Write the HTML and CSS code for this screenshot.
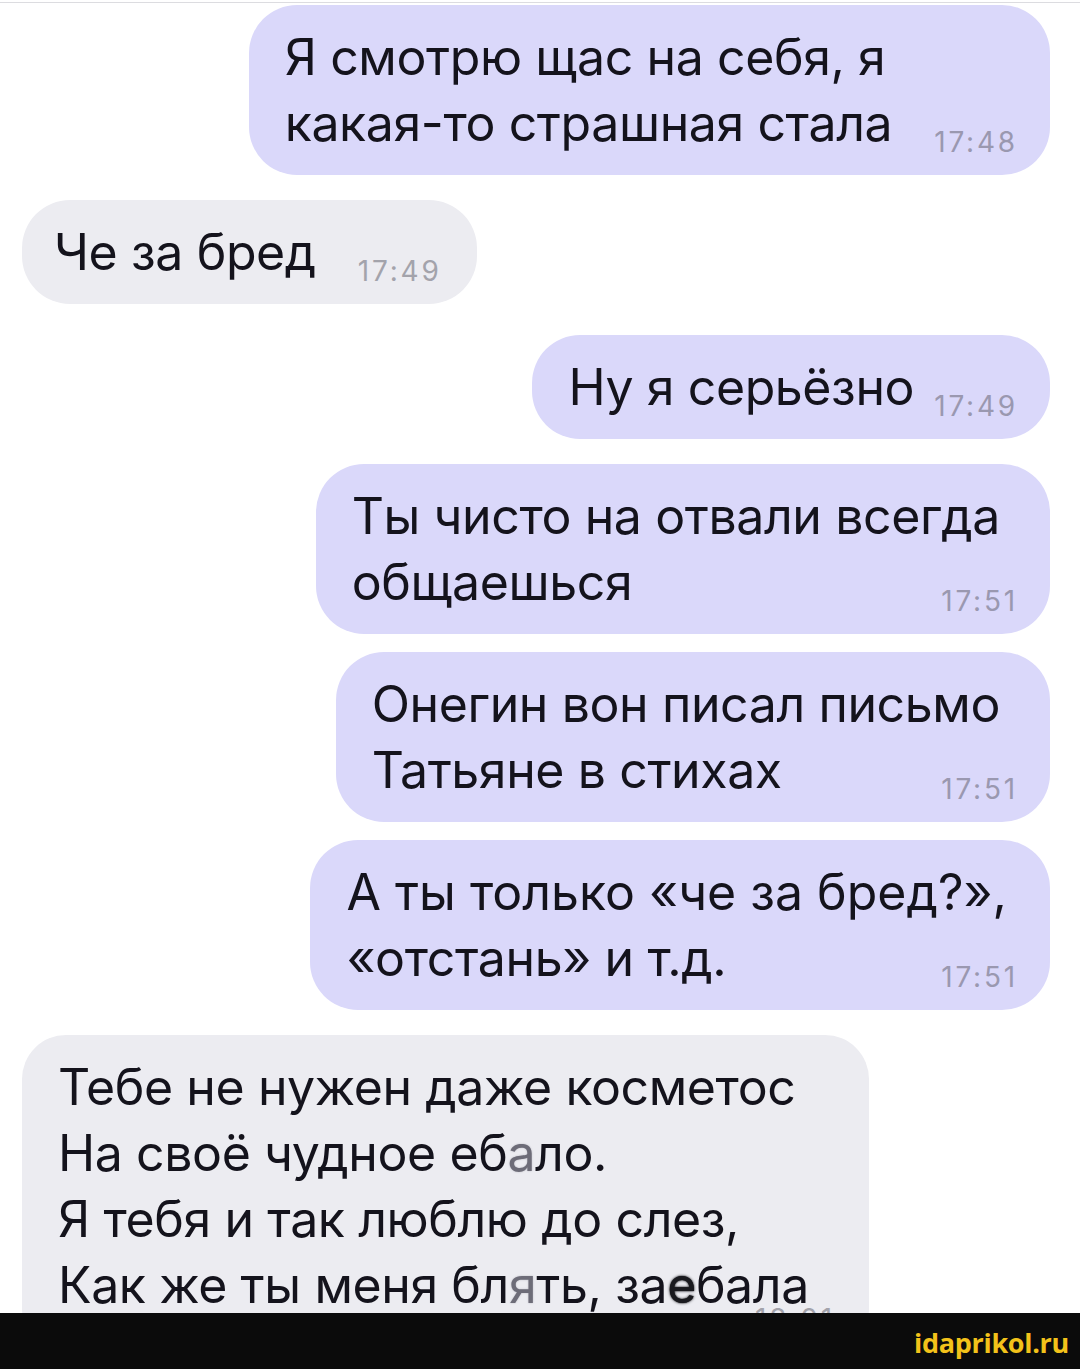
FILE: index.html
```html
<!DOCTYPE html>
<html lang="ru">
<head>
    <meta charset="UTF-8">
    <meta name="viewport" content="width=device-width, initial-scale=1.0">
    <title>Переписка</title>
    <link rel="stylesheet" href="styles.css">
</head>
<body>
    <div class="screen">
        <div class="chat">
            <div class="group">
                <div class="msg out">
                    <div class="line">Я смотрю щас на себя, я</div>
                    <div class="line last">
                        <span>какая-то страшная стала</span>
                        <span class="time">17:48</span>
                    </div>
                </div>
            </div>

            <div class="group">
                <div class="msg in">
                    <div class="line last">
                        <span>Че за бред</span>
                        <span class="time">17:49</span>
                    </div>
                </div>
            </div>

            <div class="group spaced">
                <div class="msg out">
                    <div class="line last tight">
                        <span>Ну я серьёзно</span>
                        <span class="time">17:49</span>
                    </div>
                </div>
            </div>

            <div class="group">
                <div class="msg out">
                    <div class="line">Ты чисто на отвали всегда</div>
                    <div class="line last">
                        <span>общаешься</span>
                        <span class="time">17:51</span>
                    </div>
                </div>
                <div class="msg out">
                    <div class="line">Онегин вон писал письмо</div>
                    <div class="line last">
                        <span>Татьяне в стихах</span>
                        <span class="time">17:51</span>
                    </div>
                </div>
                <div class="msg out">
                    <div class="line wide">А ты только «че за бред?»,</div>
                    <div class="line last">
                        <span>«отстань» и т.д.</span>
                        <span class="time">17:51</span>
                    </div>
                </div>
            </div>

            <div class="group">
                <div class="msg in poem">
                    <div class="line">Тебе не нужен даже косметос</div>
                    <div class="line">На своё чудное еб<span class="smudge faint">а</span>ло.</div>
                    <div class="line">Я тебя и так люблю до слез,</div>
                    <div class="line">Как же ты меня бл<span class="smudge faint">я</span>ть, за<span class="smudge blob">е</span>бала</div>
                    <div class="time-row"><span class="time">18:01</span></div>
                </div>
            </div>
        </div>

        <div class="watermark">idaprikol.ru</div>
    </div>
</body>
</html>
```

FILE: styles.css
```css
body {
    margin: 0;
    background-color: #ffffff;
    font-family: "Inter", "Roboto", "Liberation Sans", sans-serif;
}

.screen {
    width: 1080px;
    height: 1369px;
    display: flex;
    flex-direction: column;
    overflow: hidden;
}

.chat {
    flex: 1;
    overflow: hidden;
    display: flex;
    flex-direction: column;
    gap: 25px;
    padding: 2px 30px 0 22px;
    border-top: 1px solid #dcdce0; /* thin line left from the crop */
    margin-top: 2px;
}

.group {
    display: flex;
    flex-direction: column;
    gap: 18px;
}

.group.spaced {
    margin-top: 6px;
}

.msg {
    display: flex;
    flex-direction: column;
    padding: 19px 35px 19px 36px;
    border-radius: 48px;
    font-size: 50px;
    line-height: 66px;
    color: #14131c;
    letter-spacing: -0.4px;
}

.msg.out {
    align-self: flex-end;
    background-color: #dad8fa; /* lavender outgoing */
}

.msg.in {
    align-self: flex-start;
    background-color: #ececf1; /* grey incoming */
    padding-left: 32px;
    padding-right: 38px;
}

.line {
    white-space: nowrap;
    padding-right: 15px;
}

.line.wide {
    letter-spacing: 0;
    padding-right: 8px;
}

.line.last {
    display: flex;
    justify-content: space-between;
    gap: 42px;
    padding-right: 0;
}

.line.tight {
    gap: 20px;
}

.time {
    align-self: flex-end;
    font-size: 28px;
    line-height: 30px;
    margin-bottom: -1px;
    margin-right: -3px;
    letter-spacing: 2.8px;
    color: #9a98b0;
}

.msg.in .time {
    color: #a3a3ab;
}

.msg.poem {
    padding: 19px 45px 19px 36px;
    border-radius: 44px;
}

.time-row {
    display: flex;
    justify-content: flex-end;
    margin-top: -14px;
    margin-right: -8px;
}

/* letters half rubbed out in the original picture */
.smudge.faint {
    color: #6d6c78;
    text-shadow: 0 0 2px #b9b9c2;
}

.smudge.blob {
    color: #1a1a1f;
    text-shadow: 0 0 3px #1a1a1f, 0 0 1px #000000;
}

.watermark {
    height: 56px;
    flex-shrink: 0;
    background-color: #0b0b0b;
    color: #f3c21a;
    font-family: "Open Sans", "Liberation Sans", sans-serif;
    font-weight: 700;
    font-size: 27px;
    line-height: 60px;
    text-align: right;
    padding-right: 11px;
    letter-spacing: -0.3px;
}
```
